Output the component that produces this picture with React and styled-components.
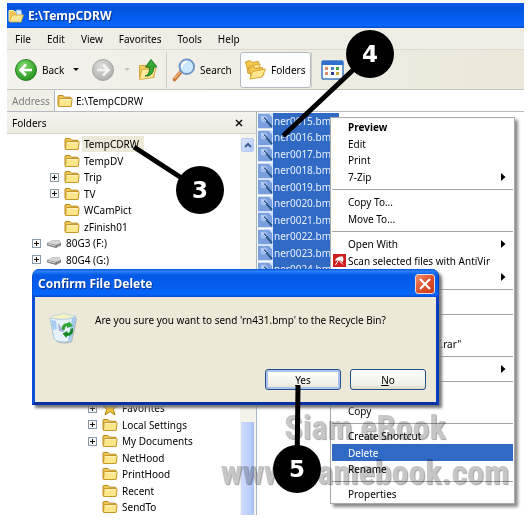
import React from 'react';
import styled, { createGlobalStyle, css } from 'styled-components';

const ui = '"Noto Sans", sans-serif';

const GlobalStyle = createGlobalStyle`
  * { box-sizing: border-box; }
  body { margin: 0; background: #fff; }
  button, input { font: inherit; color: inherit; margin: 0; padding: 0; border: 0; background: none; border-radius: 0; }
  ul { list-style: none; margin: 0; padding: 0; }
`;

const Desktop = styled.div`
  position: relative;
  padding: 3px 8px 7px 7px;
  font: 10px/16px ${ui};
  color: #000;
  white-space: nowrap;
  overflow: hidden;
`;
const Explorer = styled.main`
  display: flex;
  flex-direction: column;
`;
const TitleBar = styled.header`
  display: flex;
  align-items: center;
  gap: 4px;
  height: 25px;
  padding-left: 1px;
  background: linear-gradient(#0a5be8, #0353dd 20%, #0560f2 65%, #0a66fa 90%, #0349ce);
`;
const WindowTitle = styled.h1`
  margin: 0;
  font: bold 12px/16px ${ui};
  color: #fff;
  text-shadow: 1px 1px 1px #0a2f86;
`;
const MenuBar = styled.nav`
  display: flex;
  align-items: center;
  gap: 16px;
  height: 22px;
  padding-left: 8px;
  background: #efeee6;
  border-bottom: 1px solid #dddbd0;
`;
const Toolbar = styled.div`
  display: flex;
  align-items: center;
  height: 40px;
  padding-left: 7px;
  background: linear-gradient(90deg, #f3f2ed, #ebe8da);
  border-bottom: 1px solid #c5c4bc;
`;
const ToolButton = styled.button`
  display: flex;
  align-items: center;
  gap: 4px;
  height: 36px;
  width: ${p => p.$width}px;
  ${p => p.$pressed && css`
    padding-left: 3px;
    background: #fdfdfd;
    border: 1px solid #b4bac4;
    border-radius: 3px;
  `}
`;
const Caret = styled.span`
  margin-left: 5px;
  border: 3px solid transparent;
  border-top-color: ${p => (p.$dim ? '#c4c3bc' : '#111')};
  border-bottom: 0;
`;
const Divider = styled.span`
  width: 1px;
  height: 36px;
  background: #d2d0c5;
  margin-right: ${p => p.$after}px;
`;
const AddressBar = styled.div`
  display: flex;
  align-items: center;
  height: 22px;
  background: #f0efe8;
  border-bottom: 1px solid #b8bac0;
`;
const AddressLabel = styled.label`
  width: 47px;
  padding-left: 5px;
  color: #7f7f7a;
`;
const AddressField = styled.div`
  flex: 1;
  display: flex;
  align-items: center;
  gap: 3px;
  height: 21px;
  padding-left: 2px;
  background: #fff;
  border-left: 1px solid #a9b7c8;
`;
const AddressInput = styled.input`
  flex: 1;
  min-width: 0;
  outline: none;
`;
const Body = styled.div`
  display: flex;
`;
const FolderPane = styled.aside`
  width: 250px;
  border-right: 1px solid #a9b4c6;
`;
const PaneHeader = styled.div`
  display: flex;
  align-items: center;
  justify-content: space-between;
  height: 22px;
  padding: 0 11px 0 5px;
  background: linear-gradient(#f4f3ee, #edebe1);
  border-bottom: 1px solid #d9d6ca;
`;
const PaneClose = styled.button`
  display: flex;
  width: 12px;
  height: 16px;
  align-items: center;
  justify-content: center;
`;
const PaneContent = styled.div`
  display: flex;
  justify-content: space-between;
`;
const Tree = styled.ul`
  padding-top: 2px;
`;
const TreeRow = styled.li`
  display: flex;
  align-items: center;
  height: 16px;
  margin-top: ${p => p.$before || 0}px;
  padding-left: ${p => p.$indent}px;
  &:nth-child(even) { height: 17px; }
`;
const Expander = styled.button`
  width: 9px;
  height: 9px;
  margin-right: 5px;
  display: flex;
  visibility: ${p => (p.$shown ? 'visible' : 'hidden')};
`;
const TreeLabel = styled.span`
  margin-left: 2px;
  padding: 0 5px 0 2px;
  line-height: 16px;
  background: ${p => (p.$current ? '#ece9d8' : 'transparent')};
`;
const ScrollTrack = styled.div`
  width: 16px;
  padding: 4px 2px 0 1px;
  background: #f5f4ec;
  display: flex;
  flex-direction: column;
  justify-content: space-between;
`;
const ScrollUp = styled.button`
  display: flex;
  align-items: center;
  justify-content: center;
  height: 14px;
  background: linear-gradient(135deg, #dce7ff, #b5caf8);
  border: 1px solid #b9cbf3;
  border-radius: 2px;
`;
const ScrollThumb = styled.div`
  height: 93px;
  background: linear-gradient(90deg, #cfdcff, #b9ccfb 75%, #a6bdf2);
`;
const FileList = styled.ul`
  padding: 1px 0 0 1px;
`;
const FileRow = styled.li`
  display: flex;
  align-items: center;
  height: 16px;
  &:nth-child(even) { height: 17px; }
`;
const FileName = styled.span`
  min-width: 66px;
  padding-left: 1px;
  line-height: 17px;
  background: #316ac5;
  color: #e6efff;
`;

const ContextMenu = styled.div`
  position: absolute;
  left: 330px;
  top: 117px;
  width: 185px;
  padding: 1px;
  background: #fff;
  border: 1px solid #aaa9a5;
  box-shadow: 3px 3px 3px #8a8a8a;
`;
const MenuGroup = styled.ul`
  & + & {
    margin-top: 4px;
    padding-top: 4px;
    border-top: 1px solid #a5a49e;
  }
`;
const MenuRow = styled.li`
  height: 16px;
  &:nth-child(even) { height: 17px; }
`;
const MenuItem = styled.button`
  display: flex;
  align-items: center;
  width: 100%;
  height: 100%;
  padding-right: 7px;
  text-align: left;
  font-weight: ${p => (p.$strong ? 'bold' : 'normal')};
  background: ${p => (p.$active ? '#316ac5' : 'none')};
  color: ${p => (p.$active ? '#fff' : 'inherit')};
`;
const MenuIcon = styled.span`
  display: flex;
  width: 15px;
  padding-left: 1px;
`;
const MenuText = styled.span`
  flex: 1;
  padding-left: 1px;
`;

const Dialog = styled.section`
  position: absolute;
  left: 32px;
  top: 269px;
  width: 407px;
  background: #ece9d8;
  border: 3px solid #0b4fd8;
  border-top: 0;
  border-bottom-color: #0831a5;
  border-right-color: #0a3cc0;
  border-radius: 7px 7px 0 0;
  box-shadow: 3px 3px 3px #777;
`;
const DialogBar = styled.header`
  display: flex;
  align-items: center;
  justify-content: space-between;
  height: 28px;
  margin: 0 -2px;
  padding: 2px 3px 0 5px;
  border-radius: 6px 6px 0 0;
  background: linear-gradient(#0a50d5, #2a82fb 8%, #0459e6 22%, #0560f3 70%, #0666fc 90%, #0449cd);
`;
const DialogTitle = styled.h2`
  margin: 0;
  font: bold 12px/16px ${ui};
  color: #fff;
  text-shadow: 1px 1px 1px #0a2f86;
`;
const CloseButton = styled.button`
  display: flex;
  align-items: center;
  justify-content: center;
  width: 20px;
  height: 20px;
  border: 1px solid #f1d8d0;
  border-radius: 3px;
  background: linear-gradient(135deg, #f09070, #e0512c 50%, #c63c18);
`;
const DialogMessage = styled.div`
  display: flex;
  gap: 16px;
  padding: 15px 14px 0 14px;
`;
const MessageText = styled.p`
  margin: 0;
`;
const DialogActions = styled.div`
  display: flex;
  justify-content: flex-end;
  gap: 9px;
  padding: 25px 10px 12px;
`;
const ActionButton = styled.button`
  width: 76px;
  height: 21px;
  border: 1px solid #24508a;
  border-radius: 3px;
  background: linear-gradient(#fff, #f1f0e8 75%, #dcd8cc);
  box-shadow: ${p => (p.$default ? 'inset 0 0 0 2px #a9c2ee' : 'none')};
`;

const Watermark = styled.div`
  position: absolute;
  left: 220px;
  top: 409px;
  width: 290px;
  text-align: center;
  font-family: "Roboto Condensed", "Liberation Sans", sans-serif;
  font-weight: bold;
  color: #c6c6c6;
  text-shadow: 1px 1px 1px #a2a2a2;
  mix-blend-mode: multiply;
  pointer-events: none;
`;
const WatermarkName = styled.div`
  font-size: 34px;
  line-height: 36px;
`;
const WatermarkSite = styled.div`
  margin-top: 9px;
  font-size: 34px;
  line-height: 36px;
`;
const Annotations = styled.svg`
  position: absolute;
  left: 0;
  top: 0;
  pointer-events: none;
`;

const FolderIcon = ({ size = 16 }) => (
  <svg width={size} height={size} viewBox="0 0 16 16" aria-hidden="true">
    <path d="M1 12.5V3.5Q1 2.5 2 2.5h4l1.5 1.7H13q1.2 0 1.2 1v8z" fill="#eec650" stroke="#b98a20" />
    <path d="M1.5 13.5 2 6.2Q2.2 5.500 3 5.500h11.200q1 0 .9 1l-.8 6q-.1 1-1 1z" fill="#fde58a" stroke="#c79828" />
    <path d="M3 6.700h10.800" stroke="#fff6c8" />
  </svg>
);

const DriveIcon = () => (
  <svg width="16" height="16" viewBox="0 0 16 16" aria-hidden="true">
    <path d="M1 8 6 5.500h7.500L15 8v2.500L10 13 1 10.500z" fill="#777" />
    <path d="M1 8 6 5.500h7.500L15 8l-5 2z" fill="#d6d6d6" />
    <path d="M1.500 9 9.500 11" stroke="#ddd" />
    <path d="M11 11.500l3-1.500" stroke="#aaa" />
  </svg>
);

const StarIcon = () => (
  <svg width="16" height="16" viewBox="0 0 16 16" aria-hidden="true">
    <path d="m8 1 2 5h5.500l-4.300 3.300L13 15l-5-3.400L3 15l1.800-5.700L.5 6H6z" fill="#f8c832" stroke="#a9801c" />
  </svg>
);

const PlusBox = () => (
  <svg width="9" height="9" viewBox="0 0 9 9" aria-hidden="true">
    <rect x=".5" y=".5" width="8" height="8" fill="#f8f8f5" stroke="#8a98a8" />
    <path d="M2 4.500h5M4.500 2v5" stroke="#111" />
  </svg>
);

const OpenFolderIcon = ({ size }) => (
  <svg width={size} height={size} viewBox="0 0 16 16" aria-hidden="true">
    <path d="M1 13V2.500h4.500L7 4h6v9z" fill="#f0c754" stroke="#fff0a8" />
    <path d="M8 2h5l1 5-5 1z" fill="#d9ecff" stroke="#7aa9e0" strokeWidth=".7" />
    <path d="M1.500 14 4 7h11.500L13 14z" fill="#ffe796" stroke="#d5a437" strokeWidth=".8" />
  </svg>
);

const RoundArrow = ({ back }) => (
  <svg width="24" height="24" viewBox="0 0 24 24" aria-hidden="true">
    <defs>
      <radialGradient id={back ? 'goBack' : 'goForward'} cx=".4" cy=".3" r=".75">
        <stop offset="0" stopColor={back ? '#7fdc6a' : '#dcdcda'} />
        <stop offset="1" stopColor={back ? '#1f8f1a' : '#adadab'} />
      </radialGradient>
    </defs>
    <circle cx="12" cy="12" r="10.500" fill={back ? 'url(#goBack)' : 'url(#goForward)'} stroke={back ? '#2c7f28' : '#a6a6a3'} />
    <path
      d={back ? 'M18 12H7M12 6.500 6.500 12l5.500 5.500' : 'M6 12h11M12 6.500l5.500 5.500-5.500 5.500'}
      fill="none" stroke={back ? '#fff' : '#f3f3f1'} strokeWidth="2.600"
    />
  </svg>
);

const UpIcon = () => (
  <svg width="21" height="23" viewBox="0 0 21 23" aria-hidden="true">
    <path d="M1.500 7.500h6l1 2H16v10H1.500z" fill="#f0cc5c" stroke="#cda338" />
    <path d="M1.500 21.500 4 11.500l14-1-3 9z" fill="#ffea9c" stroke="#d7ae43" />
    <path d="M7 18c4-1 4.500-4 4.500-9H7.500L13 1.500l6 7.500h-3.500c.5 6-3 9.500-8.500 9z" fill="#39a835" stroke="#1c761c" />
  </svg>
);

const SearchIcon = () => (
  <svg width="24" height="24" viewBox="0 0 24 24" aria-hidden="true">
    <path d="M2.500 21.500 9.500 13" stroke="#c97a3a" strokeWidth="3.600" strokeLinecap="round" />
    <path d="M2.500 20.500 8.500 13.500" stroke="#efb37b" strokeWidth="1.200" />
    <circle cx="14.800" cy="8.700" r="7.300" fill="#c9e8fb" stroke="#6b93c9" strokeWidth="1.800" />
    <path d="M10 9q0-5 5-5.200" stroke="#fff" strokeWidth="2" fill="none" />
  </svg>
);

const FoldersIcon = () => (
  <svg width="23" height="23" viewBox="0 0 23 23" aria-hidden="true">
    <path d="m1.500 4 4.500-1.500 2 2 6.500-1 1 8-11 4z" fill="#f5cb50" stroke="#d29b28" />
    <path d="M3.500 15 5 8l11-2-1 8z" fill="#ffe48a" stroke="#d9a534" />
    <path d="m4.500 10 5-1.500 2 2 7-1 1.500 7-12 4z" fill="#f5cb50" stroke="#d29b28" />
    <path d="m6 21 2.500-7.500 13-2.500-3.500 8z" fill="#ffe78f" stroke="#d9a534" />
  </svg>
);

const ViewsIcon = () => (
  <svg width="23" height="20" viewBox="0 0 23 20" aria-hidden="true">
    <rect x="1" y="1" width="21" height="18" rx="1" fill="#fff" stroke="#3c78c4" strokeWidth="1.500" />
    <path d="M1 3h21" stroke="#2f6fd0" strokeWidth="4" />
    <path d="M4 7h3v3H4zM4 12h3v3H4z" fill="#e08a72" />
    <path d="M10 7h3v3h-3z" fill="#4b7fe0" />
    <path d="M10 12h3v3h-3z" fill="#2a3f9a" />
    <path d="M15 7h3v3h-3z" fill="#43a043" />
    <path d="M15 12h3v3h-3z" fill="#c9a93a" />
  </svg>
);

const ImageFileIcon = () => (
  <svg width="15" height="16" viewBox="0 0 15 16" aria-hidden="true">
    <rect width="15" height="16" fill="#d3e0f6" />
    <path d="M0 1h11l3 3v11H0z" fill="#7a9fdf" />
    <circle cx="6" cy="6" r="3.500" fill="#a4c0ee" />
    <path d="m6 5 8 9" stroke="#2d5a8c" strokeWidth="2" />
    <path d="m3 3 5 5" stroke="#cfe0fb" />
  </svg>
);

const AntiVirIcon = () => (
  <svg width="13" height="13" viewBox="0 0 13 13" aria-hidden="true">
    <rect width="13" height="13" fill="#cf1f1f" />
    <path d="M2 7Q3 2 10 2.500q1 3-.5 6Q7 5 2 7z" fill="#fff" />
    <path d="m6 5-3.500 6" stroke="#fff" />
    <path d="m6 6.500 4 4" stroke="#fff" />
  </svg>
);

const SubmenuArrow = () => (
  <svg width="5" height="8" viewBox="0 0 5 8" aria-hidden="true"><path d="M0 0v8l4.500-4z" fill="#000" /></svg>
);

const RecycleBinIcon = () => (
  <svg width="30" height="32" viewBox="0 0 30 32" aria-hidden="true">
    <path d="m3 8 5 22q7 3 15 0l5-23z" fill="#7d8c98" opacity=".55" />
    <path d="m1 6 4 21q6 5 17 2l5-24q-10 4-26 1z" fill="#e6f1fa" stroke="#a8c6df" />
    <path d="M1 6q5-4 9-3l5-2 5 2 7 1q-8 5-26 2z" fill="#f7f3c4" stroke="#c3d6e2" />
    <path d="m23 6 4-1-5 23-3 1z" fill="#a4c9ee" />
    <path d="m2 8 5 1 1 8-4 1z" fill="#a9cdf0" />
    <path d="m9 11 4 5 3-3-1 7-5-1z" fill="#aab2da" />
    <path d="M13 18q-1-7 6-7l1-1.500 4 4.500-6 2v-2q-2 0-2 3.500z" fill="#2fa336" />
    <path d="M24 16q1 8-6 8l-.5 2-4-4.500 5-2.500v2q3 0 3-4z" fill="#168a24" />
  </svg>
);

const treeRows = [
  { name: 'TempCDRW', current: true },
  { name: 'TempDV' },
  { name: 'Trip', more: true },
  { name: 'TV', more: true },
  { name: 'WCamPict' },
  { name: 'zFinish01' },
  { name: '80G3 (F:)', more: true, indent: 25, Icon: DriveIcon },
  { name: '80G4 (G:)', more: true, indent: 25, Icon: DriveIcon },
  { name: 'Favorites', more: true, indent: 81, Icon: StarIcon, before: 132 },
  { name: 'Local Settings', more: true, indent: 81 },
  { name: 'My Documents', more: true, indent: 81 },
  { name: 'NetHood', indent: 81 },
  { name: 'PrintHood', indent: 81 },
  { name: 'Recent', indent: 81 },
  { name: 'SendTo', indent: 81 },
];

const files = ['15', '16', '17', '18', '19', '20', '21', '22', '23', '24'].map(n => `ner00${n}.bmp`);

const menuGroups = [
  [{ text: 'Preview', strong: true }, { text: 'Edit' }, { text: 'Print' }, { text: '7-Zip', sub: true }],
  [{ text: 'Copy To...' }, { text: 'Move To...' }],
  [{ text: 'Open With', sub: true }, { text: 'Scan selected files with AntiVir', Icon: AntiVirIcon }, { text: '', sub: true }],
  [{ text: '' }],
  [{ text: '' }, { text: 'Add to "TempCDRW.rar"' }],
  [{ text: '', sub: true }],
  [{ text: 'Cut' }, { text: 'Copy' }],
  [{ text: 'Create Shortcut' }, { text: 'Delete', active: true }, { text: 'Rename' }],
  [{ text: 'Properties' }],
];

const callouts = [
  { n: 3, x: 200, y: 190, from: [134, 147] },
  { n: 4, x: 370, y: 54, from: [283, 136] },
  { n: 5, x: 297, y: 469, from: [298, 386] },
];

export default function App() {
  return (
    <Desktop>
      <GlobalStyle />
      <Explorer>
        <TitleBar>
          <OpenFolderIcon size={16} />
          <WindowTitle>E:\TempCDRW</WindowTitle>
        </TitleBar>
        <MenuBar>
          {['File', 'Edit', 'View', 'Favorites', 'Tools', 'Help'].map(m => <button key={m}>{m}</button>)}
        </MenuBar>
        <Toolbar>
          <ToolButton $width={77}><RoundArrow back />Back<Caret /></ToolButton>
          <ToolButton $width={47} aria-label="Forward"><RoundArrow /><Caret $dim /></ToolButton>
          <ToolButton $width={28} aria-label="Up"><UpIcon /></ToolButton>
          <Divider $after={5} />
          <ToolButton $width={68}><SearchIcon />Search</ToolButton>
          <ToolButton $width={71} $pressed aria-pressed="true"><FoldersIcon />Folders</ToolButton>
          <Divider $after={9} />
          <ToolButton $width={40} aria-label="Views"><ViewsIcon /><Caret /></ToolButton>
        </Toolbar>
        <AddressBar>
          <AddressLabel htmlFor="address">Address</AddressLabel>
          <AddressField>
            <FolderIcon />
            <AddressInput id="address" defaultValue="E:\TempCDRW" />
          </AddressField>
        </AddressBar>
        <Body>
          <FolderPane>
            <PaneHeader>
              Folders
              <PaneClose aria-label="Close folders">
                <svg width="8" height="8" viewBox="0 0 8 8"><path d="m1 1 6 6M7 1 1 7" stroke="#111" strokeWidth="1.500" /></svg>
              </PaneClose>
            </PaneHeader>
            <PaneContent>
              <Tree>
                {treeRows.map(({ name, more, current, indent = 43, before, Icon = FolderIcon }) => (
                  <TreeRow key={name} $indent={indent} $before={before}>
                    <Expander $shown={more} aria-label={`Expand ${name}`}><PlusBox /></Expander>
                    <Icon />
                    <TreeLabel $current={current}>{name}</TreeLabel>
                  </TreeRow>
                ))}
              </Tree>
              <ScrollTrack>
                <ScrollUp aria-label="Scroll up">
                  <svg width="8" height="6" viewBox="0 0 8 6"><path d="m1 5 3-3 3 3" fill="none" stroke="#3f5f98" strokeWidth="2" /></svg>
                </ScrollUp>
                <ScrollThumb />
              </ScrollTrack>
            </PaneContent>
          </FolderPane>
          <FileList>
            {files.map(f => (
              <FileRow key={f}><ImageFileIcon /><FileName>{f}</FileName></FileRow>
            ))}
          </FileList>
        </Body>
      </Explorer>

      <ContextMenu>
        {menuGroups.map((group, g) => (
          <MenuGroup key={g}>
            {group.map(({ text, strong, sub, active, Icon }, i) => (
              <MenuRow key={i}>
                <MenuItem $strong={strong} $active={active}>
                  <MenuIcon>{Icon && <Icon />}</MenuIcon>
                  <MenuText>{text}</MenuText>
                  {sub && <SubmenuArrow />}
                </MenuItem>
              </MenuRow>
            ))}
          </MenuGroup>
        ))}
      </ContextMenu>

      <Dialog role="dialog" aria-labelledby="dialog-title">
        <DialogBar>
          <DialogTitle id="dialog-title">Confirm File Delete</DialogTitle>
          <CloseButton aria-label="Close">
            <svg width="12" height="12" viewBox="0 0 12 12"><path d="m1 1 10 10M11 1 1 11" stroke="#fff" strokeWidth="2.200" /></svg>
          </CloseButton>
        </DialogBar>
        <DialogMessage>
          <RecycleBinIcon />
          <MessageText>Are you sure you want to send 'rn431.bmp' to the Recycle Bin?</MessageText>
        </DialogMessage>
        <DialogActions>
          <ActionButton $default><u>Y</u>es</ActionButton>
          <ActionButton><u>N</u>o</ActionButton>
        </DialogActions>
      </Dialog>

      <Watermark>
        <WatermarkName>Siam eBook</WatermarkName>
        <WatermarkSite>www.siamebook.com</WatermarkSite>
      </Watermark>

      <Annotations width="532" height="520" viewBox="0 0 532 520">
        {callouts.map(({ n, x, y, from }) => (
          <g key={n}>
            <line x1={from[0]} y1={from[1]} x2={x} y2={y} stroke="#000" strokeWidth="5" />
            <circle cx={x} cy={y} r="24" fill="#000" />
            <text x={x} y={y + 8} textAnchor="middle" fill="#fff" fontFamily="DejaVu Sans, sans-serif" fontWeight="bold" fontSize="23">{n}</text>
          </g>
        ))}
      </Annotations>
    </Desktop>
  );
}
